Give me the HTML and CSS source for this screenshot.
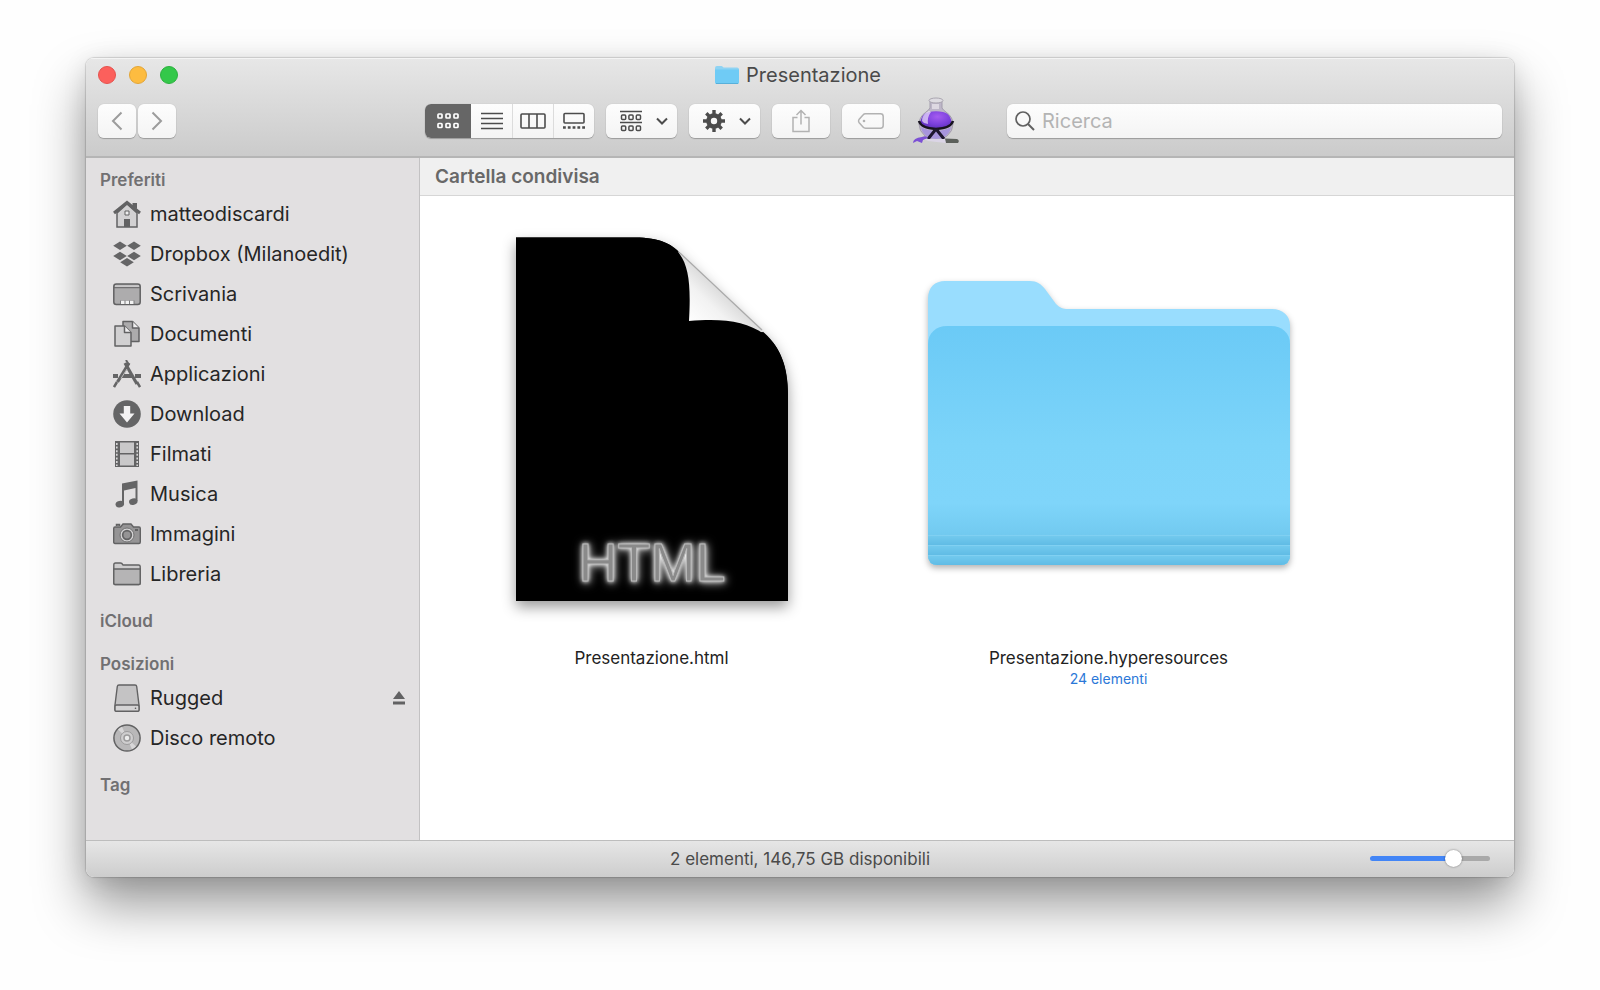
FILE: index.html
```html
<!DOCTYPE html>
<html lang="it">
<head>
<meta charset="utf-8">
<title>Presentazione</title>
<link rel="stylesheet" href="styles.css">
</head>
<body>
<main class="window">
  <header class="toolbar">
    <div class="titlebar">
      <div class="lights">
        <button class="light light-close" aria-label="Chiudi"></button>
        <button class="light light-min" aria-label="Riduci"></button>
        <button class="light light-zoom" aria-label="Ingrandisci"></button>
      </div>
      <h1 class="title">
        <svg width="24" height="20" viewBox="0 0 24 20" aria-hidden="true">
          <path d="M0 3Q0 1 2 1H6.500Q7.500 1 8.500 2.500H22Q24 2.500 24 4.500V17Q24 19 22 19H2Q0 19 0 17Z" fill="#8fd3f3"/>
          <path d="M0 4.500H24V17Q24 19 22 19H2Q0 19 0 17Z" fill="#6fcbf5"/>
          <path d="M1 18.500H23" stroke="#58b0da"/>
        </svg>
        Presentazione
      </h1>
    </div>
    <div class="tools">
      <nav class="history">
        <button class="btn nav-btn" aria-label="Indietro"><svg width="12" height="20" viewBox="0 0 12 20"><path d="M10.500 1.500L2 10L10.500 18.500"/></svg></button>
        <button class="btn nav-btn" aria-label="Avanti"><svg width="12" height="20" viewBox="0 0 12 20"><path d="M1.500 1.500L10 10L1.500 18.500"/></svg></button>
      </nav>
      <div class="segments" role="group" aria-label="Vista">
        <button class="seg seg-on" aria-pressed="true" aria-label="Icone">
          <svg width="24" height="18" viewBox="0 0 24 18" fill="none" stroke="#fff" stroke-width="1.700"><rect x="2" y="2" width="4" height="4" rx=".8"/><rect x="10" y="2" width="4" height="4" rx=".8"/><rect x="18" y="2" width="4" height="4" rx=".8"/><rect x="2" y="11.500" width="4" height="4" rx=".8"/><rect x="10" y="11.500" width="4" height="4" rx=".8"/><rect x="18" y="11.500" width="4" height="4" rx=".8"/></svg>
        </button>
        <button class="seg" aria-pressed="false" aria-label="Elenco">
          <svg width="22" height="18" viewBox="0 0 22 18" stroke="#4c4c4c" stroke-width="1.600"><path d="M0 1.500H22M0 6.500H22M0 11.500H22M0 16.500H22"/></svg>
        </button>
        <button class="seg" aria-pressed="false" aria-label="Colonne">
          <svg width="26" height="18" viewBox="0 0 26 18" fill="none" stroke="#4c4c4c" stroke-width="1.600"><rect x="1" y="2" width="24" height="14" rx="1"/><path d="M9 2V16M17 2V16"/></svg>
        </button>
        <button class="seg" aria-pressed="false" aria-label="Galleria">
          <svg width="22" height="18" viewBox="0 0 22 18" fill="none" stroke="#4c4c4c"><rect x="1" y="1.500" width="20" height="9.500" rx="1" stroke-width="1.600"/><path d="M0 15.500H22" stroke-width="2.500" stroke-dasharray="2.800 2"/></svg>
        </button>
      </div>
      <button class="btn menu-btn" aria-label="Raggruppa">
        <svg width="22" height="22" viewBox="0 0 22 22" fill="none" stroke="#4c4c4c" stroke-width="1.500"><path d="M0 1.500H22M0 12.500H22"/><rect x="1.500" y="5" width="4.200" height="4.500" rx="1"/><rect x="8.900" y="5" width="4.200" height="4.500" rx="1"/><rect x="16.300" y="5" width="4.200" height="4.500" rx="1"/><rect x="1.500" y="16" width="4.200" height="4.500" rx="1"/><rect x="8.900" y="16" width="4.200" height="4.500" rx="1"/><rect x="16.300" y="16" width="4.200" height="4.500" rx="1"/></svg>
        <svg width="12" height="8" viewBox="0 0 12 8" fill="none" stroke="#4c4c4c" stroke-width="2"><path d="M1 1.500L6 6.500L11 1.500"/></svg>
      </button>
      <button class="btn menu-btn" aria-label="Azioni">
        <svg width="22" height="22" viewBox="-11 -11 22 22" fill="none" stroke="#4c4c4c"><circle r="5.500" stroke-width="4.600"/><path d="M0-7V-11M0 7V11M-7 0H-11M7 0H11M5-5L7.700-7.700M-5-5L-7.700-7.700M5 5L7.700 7.700M-5 5L-7.700 7.700" stroke-width="3.400"/></svg>
        <svg width="12" height="8" viewBox="0 0 12 8" fill="none" stroke="#4c4c4c" stroke-width="2"><path d="M1 1.500L6 6.500L11 1.500"/></svg>
      </button>
      <button class="btn action-btn" aria-label="Condividi">
        <svg width="20" height="24" viewBox="0 0 20 24" fill="none" stroke="#b2b2b2" stroke-width="1.500"><path d="M6.500 8.500H2V22.500H18V8.500H13.500M10 15.500V1.500M5.500 6L10 1.500L14.500 6"/></svg>
      </button>
      <button class="btn action-btn" aria-label="Tag">
        <svg width="28" height="18" viewBox="0 0 28 18" fill="none" stroke="#b2b2b2" stroke-width="1.500"><path d="M8.500 1.800H23.500Q26.200 1.800 26.200 4.500V13.500Q26.200 16.200 23.500 16.200H8.500Q7 16.200 6 15L2 10.500Q1 9 2 7.500L6 3Q7 1.800 8.500 1.800Z"/><circle cx="7" cy="9" r="1.300" fill="#b2b2b2" stroke="none"/></svg>
      </button>
      <button class="flask" aria-label="Alfred">
        <svg width="48" height="48" viewBox="0 0 48 48">
          <defs>
            <radialGradient id="potion" cx=".55" cy=".3" r=".7"><stop offset="0" stop-color="#a45cf0"/><stop offset=".6" stop-color="#7a3fdc"/><stop offset="1" stop-color="#5a2fb4"/></radialGradient>
          </defs>
          <path d="M18 4H30V11Q31 13 34 15Q41 20 41 27Q41 34 35 39Q30 43 24 43Q18 43 13 39Q7 34 7 27Q7 20 14 15Q17 13 18 11Z" fill="#bdb6c8" stroke="#a39dad"/>
          <path d="M9 30Q24 38 39 30Q37 41 24 42Q11 41 9 30Z" fill="#a795dc"/>
          <path d="M10 20Q12 16 17 15Q24 13.500 31 15Q36 16 38 20Q41 26 38 29Q24 36 10 29Q7 26 10 20Z" fill="url(#potion)"/>
          <path d="M10 24Q10 17 17 14L19 15Q15 20 16 27L12 26Z" fill="#fff" opacity=".6"/>
          <ellipse cx="24" cy="3.500" rx="7" ry="2.500" fill="#dedce2" stroke="#aaa6b0"/>
          <path d="M20 7H27V12H20Z" fill="#f1eff3" opacity=".6"/>
          <path d="M7 24Q9 31 24 32Q39 31 41 24" fill="none" stroke="#17131f" stroke-width="2.500"/>
          <path d="M24 32L16 42M24 32L32 42" stroke="#1f1830" stroke-width="3"/>
          <path d="M1 46Q1 41 10 40Q14 38 16 41L11 43L10 46L5 44Z" fill="#7c50d5"/>
          <path d="M12 42L34 42L34 46L16 44Z" fill="#dbd5e6"/>
          <path d="M33 41.500L45 42Q48 43.500 46 46L34 46Z" fill="#5c605b"/>
        </svg>
      </button>
      <label class="search">
        <svg width="20" height="20" viewBox="0 0 20 20" fill="none" stroke="#606060" stroke-width="1.700" aria-hidden="true"><circle cx="8" cy="8" r="7"/><path d="M13 13L19 19" stroke-width="2"/></svg>
        <input class="search-input" type="search" placeholder="Ricerca" aria-label="Ricerca">
      </label>
    </div>
  </header>

  <div class="body">
    <aside class="sidebar">
      <h2 class="side-head">Preferiti</h2>
      <ul class="side-list">
        <li><a class="side-item" href="#"><svg class="side-icon" viewBox="0 0 28 28"><path d="M4 13L14 4L24 13V27H4Z" fill="#d2d1d2" stroke="#626263" stroke-width="1.500"/><path d="M19.500 3H24V9L19.500 6Z" fill="#626263"/><path d="M1 13L14 2.500L27 13" fill="none" stroke="#626263" stroke-width="3"/><path d="M11 19H17V27H11Z" fill="#626263"/><path d="M12 11H16V15H12Z" fill="#eee" stroke="#626263"/></svg>matteodiscardi</a></li>
        <li><a class="side-item" href="#"><svg class="side-icon" viewBox="0 0 28 28" fill="#656566"><path d="M7 1.500L13.800 5.800L7 10.100L.2 5.800ZM21 1.500L27.800 5.800L21 10.100L14.200 5.800ZM7 11.700L13.800 16L7 20.300L.2 16ZM21 11.700L27.800 16L21 20.300L14.200 16ZM14 18L20.800 22.300L14 26.600L7.200 22.300Z"/></svg>Dropbox (Milanoedit)</a></li>
        <li><a class="side-item" href="#"><svg class="side-icon" viewBox="0 0 28 28"><rect x=".8" y="4" width="26.400" height="20.500" rx="2.500" fill="#adacad" stroke="#626263" stroke-width="1.500"/><path d="M2 5.200H26V7H2Z" fill="#c9c8c9"/><path d="M1 7.700H27" stroke="#626263"/><path d="M7 21H21V24H7Z" fill="#f2f2f2"/><path d="M7.500 20.500V24M12 20.500V24M16.500 20.500V24M21 20.500V24" stroke="#7b7b7c"/></svg>Scrivania</a></li>
        <li><a class="side-item" href="#"><svg class="side-icon" viewBox="0 0 28 28" stroke="#626263" stroke-width="1.500" stroke-linejoin="round"><path d="M10 1.500H19.500L26 8V21.500H10Z" fill="#acabac"/><path d="M19.500 1.500V8H26" fill="#f0eff0"/><path d="M2 6H11.500L18 12.500V26H2Z" fill="#d1d0d1"/><path d="M11.500 6V12.500H18" fill="#f0eff0"/></svg>Documenti</a></li>
        <li><a class="side-item" href="#"><svg class="side-icon" viewBox="0 0 28 28" fill="none" stroke="#656566"><path d="M12 3L24 24" stroke-width="3.200"/><path d="M16 3L4.500 22" stroke-width="3.200"/><path d="M0 16H5M8.500 16H19M22 16H28" stroke-width="4"/><path d="M13 0L16 5" stroke-width="2"/><path d="M4 22L1 27M24 22L27 27" stroke-width="2.500"/><path d="M14 9L8 18.500" stroke="#bdbcbd"/></svg>Applicazioni</a></li>
        <li><a class="side-item" href="#"><svg class="side-icon" viewBox="0 0 28 28"><circle cx="14" cy="14" r="13.800" fill="#656566"/><path d="M10.800 6H17.200V13.500H21.500L14 22.500L6.500 13.500H10.800Z" fill="#f3f2f3"/></svg>Download</a></li>
        <li><a class="side-item" href="#"><svg class="side-icon" viewBox="0 0 28 28"><rect x="2" y="1" width="24" height="26" fill="#636364"/><path d="M3.800 3V26M24.200 3V26" stroke="#d8d7d8" stroke-width="1.600" stroke-dasharray="2 1.600"/><path d="M7 2.500H21V13H7ZM7 14.500H21V25.500H7Z" fill="#c9c8c9"/></svg>Filmati</a></li>
        <li><a class="side-item" href="#"><svg class="side-icon" viewBox="0 0 28 28" fill="#656566"><path d="M9 3.500L24.500 .5V21H22.500V8L11 10.500V24H9Z"/><ellipse cx="6.800" cy="24.200" rx="4.300" ry="3.200" transform="rotate(-15 6.800 24.200)"/><ellipse cx="20.300" cy="21.700" rx="4.300" ry="3.200" transform="rotate(-15 20.300 21.700)"/></svg>Musica</a></li>
        <li><a class="side-item" href="#"><svg class="side-icon" viewBox="0 0 28 28" stroke="#626263"><path d="M3.500 6V4.500H6.500V6" stroke-width="1.500" fill="#8c8b8c"/><path d="M2 7H7.500L10 4H18L20.500 7H26Q27.300 7 27.300 8.500V22Q27.300 23.500 26 23.500H2Q.7 23.500 .7 22V8.500Q.7 7 2 7Z" fill="#959495" stroke-width="1.400"/><circle cx="14" cy="15" r="7" fill="#d4d3d4" stroke="#717172"/><circle cx="14" cy="15" r="4.300" fill="#959495" stroke-width="1.700"/><path d="M22 10H25" stroke-width="2"/></svg>Immagini</a></li>
        <li><a class="side-item" href="#"><svg class="side-icon" viewBox="0 0 28 28" stroke="#626263" stroke-width="1.400"><path d="M.8 5Q.8 3 2.500 3H7.500Q9 3 10 5H25.500Q27.200 5 27.200 6.500V23Q27.200 24.500 26 24.500H2Q.8 24.500 .8 23Z" fill="#cdcccd"/><path d="M.8 9H27.200V23Q27.200 24.500 26 24.500H2Q.8 24.500 .8 23Z" fill="#b5b4b5"/></svg>Libreria</a></li>
      </ul>
      <h2 class="side-head">iCloud</h2>
      <h2 class="side-head">Posizioni</h2>
      <ul class="side-list">
        <li class="side-row"><a class="side-item" href="#"><svg class="side-icon" viewBox="0 0 28 28" stroke="#626263" stroke-width="1.400"><path d="M6 1H22Q23.500 1 23.700 2.500L26 21V26Q26 27.200 24.500 27.200H3.500Q2 27.200 2 26V21L4.300 2.500Q4.500 1 6 1Z" fill="#c4c3c4"/><path d="M2 22.500Q2 21 3.500 21H24.500Q26 21 26 22.500V26Q26 27.200 24.500 27.200H3.500Q2 27.200 2 26Z" fill="#d4d3d4"/><circle cx="22.500" cy="24.200" r=".8" fill="#555" stroke="none"/></svg>Rugged</a>
          <button class="eject" aria-label="Espelli Rugged"><svg width="14" height="14" viewBox="0 0 14 14" fill="#626263"><path d="M7 0L13 8H1ZM1 10.500H13V13.500H1Z"/></svg></button></li>
        <li><a class="side-item" href="#"><svg class="side-icon" viewBox="0 0 28 28"><circle cx="14" cy="14" r="13.100" fill="#b9b8b9" stroke="#626263" stroke-width="1.500"/><path d="M14 14L5 5.500A12.300 12.300 0 0 1 9 2.800ZM14 14L23 22.500A12.300 12.300 0 0 1 19 25.200Z" fill="#d8d7d8"/><circle cx="14" cy="14" r="6.500" fill="#cfcecf" stroke="#9c9b9c"/><circle cx="14" cy="14" r="3" fill="#ececec" stroke="#9c9b9c" stroke-width="1.500"/></svg>Disco remoto</a></li>
      </ul>
      <h2 class="side-head">Tag</h2>
    </aside>

    <section class="content">
      <h2 class="pathbar">Cartella condivisa</h2>
      <div class="files">
        <figure class="file">
          <svg class="file-icon" width="364" height="364" viewBox="0 0 364 364" role="img" aria-label="Documento HTML">
            <defs>
              <linearGradient id="curl" gradientUnits="userSpaceOnUse" x1="216" y1="84" x2="252" y2="46"><stop offset="0" stop-color="#fff"/><stop offset=".55" stop-color="#f2f2f2"/><stop offset="1" stop-color="#d4d4d4"/></linearGradient>
            </defs>
            <g class="page-shadow">
              <path d="M46 .500H165C190 .500 204 8 211 17L291 93C310 108 318 130 318 158V364H46Z" fill="#000"/>
            </g>
            <path d="M208 14L294 95L255 97L219 84Z" fill="url(#curl)"/>
            <path d="M210 16L292 93" stroke="#aaa" stroke-width="1.200"/>
            <path d="M46 .500H165C190 .500 201 7 208 15C219 28 221 48 219 84C252 81 276 84 294 97C311 110 318 130 318 158V364H46Z" fill="#000"/>
            <text class="page-text" x="182" y="344" text-anchor="middle">HTML</text>
          </svg>
          <figcaption class="file-label">Presentazione.html</figcaption>
        </figure>
        <figure class="file">
          <svg class="file-icon" width="364" height="364" viewBox="0 0 364 364" role="img" aria-label="Cartella">
            <defs>
              <linearGradient id="front" x1="0" y1="0" x2="0" y2="1"><stop offset="0" stop-color="#6bcaf6"/><stop offset=".5" stop-color="#7cd4f9"/><stop offset=".74" stop-color="#7fd5fa"/><stop offset=".87" stop-color="#72caf0"/><stop offset="1" stop-color="#69c3eb"/></linearGradient>
              <linearGradient id="fold" x1="0" y1="0" x2="0" y2="1"><stop offset="0" stop-color="#74cbef"/><stop offset="1" stop-color="#60bce5"/></linearGradient>
            </defs>
            <g class="folder-shadow">
              <path d="M1 62C1 50 8 44 18 44H103C110 44 114 47 118 52L129 67C133 71 136 72 141 72H345C356 72 363 79 363 88V318Q363 328 353 328H11Q1 328 1 318Z" fill="#99ddfe"/>
              <path d="M1 107C1 96 9 89 20 89H344C355 89 363 96 363 107V318Q363 328 353 328H11Q1 328 1 318Z" fill="url(#front)"/>
              <path d="M1 298H363V308H1Z" fill="url(#fold)"/>
              <path d="M1 308H363V318H1Z" fill="url(#fold)"/>
              <path d="M1 318H363Q363 328 353 328H11Q1 328 1 318Z" fill="url(#fold)"/>
              <path d="M1 298.500H363M1 308.500H363M1 318.500H363" stroke="#80d0f2"/>
            </g>
          </svg>
          <figcaption class="file-label">Presentazione.hyperesources<span class="file-count">24 elementi</span></figcaption>
        </figure>
      </div>
    </section>
  </div>

  <footer class="statusbar">
    <p class="status-text">2 elementi, 146,75 GB disponibili</p>
    <input class="zoom" type="range" min="0" max="100" value="73" aria-label="Dimensione icone">
  </footer>
</main>
</body>
</html>
```
FILE: styles.css
```css
* { box-sizing: border-box; }

body {
  margin: 0;
  min-height: 100vh;
  padding: 58px 86px 113px;
  display: flex;
  background: #fefefe;
  font-family: Inter, "Liberation Sans", sans-serif;
  color: #262626;
}

button { border: 0; padding: 0; background: none; font: inherit; }
svg { display: block; flex: none; }
ul, figure, h1, h2, p { margin: 0; padding: 0; list-style: none; }

.window {
  flex: 1;
  display: flex;
  flex-direction: column;
  border-radius: 8px;
  overflow: hidden;
  background: #fff;
  box-shadow: 0 0 1px 1px rgba(0, 0, 0, .14), 0 28px 52px rgba(0, 0, 0, .4), 0 4px 24px rgba(0, 0, 0, .1);
}

.toolbar {
  padding: 0 12px 18px;
  background: linear-gradient(#e7e7e7, #cbcbcb);
  border-bottom: 2px solid #b5b5b5;
  box-shadow: inset 0 1px #f4f4f4;
}

.titlebar {
  display: grid;
  grid-template-columns: 1fr auto 1fr;
  align-items: center;
  height: 34px;
  margin-bottom: 12px;
}

.lights { display: flex; gap: 13px; }
.light { width: 18px; height: 18px; border-radius: 50%; border: 1px solid; }
.light-close { background: #fc605c; border-color: #e5524e; }
.light-min { background: #fdbc40; border-color: #e2a537; }
.light-zoom { background: #34c84a; border-color: #2bb03e; }

.title {
  display: flex;
  align-items: center;
  gap: 7px;
  padding-right: 4px;
  font-size: 20px;
  font-weight: 400;
  line-height: 24px;
  color: #4a4a4a;
}

.tools { display: flex; align-items: center; gap: 12px; height: 34px; }

.btn, .segments, .search {
  height: 34px;
  border-radius: 6px;
  background: linear-gradient(#fdfdfd, #f4f4f4);
  box-shadow: 0 1px 1px rgba(0, 0, 0, .24), 0 0 1px rgba(0, 0, 0, .2);
}
.btn { display: flex; align-items: center; justify-content: center; }

.history { display: flex; gap: 2px; width: 315px; }
.nav-btn { width: 38px; fill: none; stroke: #9c9c9c; stroke-width: 2; }

.segments { display: flex; overflow: hidden; }
.seg { width: 41px; display: flex; align-items: center; justify-content: center; border-left: 1px solid #dcdcdc; }
.seg-on { width: 46px; background: #666; border-left: 0; }
.seg-on + .seg { border-left: 0; }

.menu-btn { width: 71px; gap: 14px; padding-left: 4px; }
.action-btn { width: 58px; }
.flask { width: 48px; height: 48px; margin-right: 35px; }

.search { flex: 1; display: flex; align-items: center; gap: 7px; padding: 0 8px; }
.search-input {
  flex: 1;
  min-width: 0;
  border: 0;
  padding: 0;
  background: none;
  outline: 0;
  font: inherit;
  font-size: 20px;
}
.search-input::placeholder { color: #b4b4b4; opacity: 1; }

.body { flex: 1; display: flex; }

.sidebar {
  width: 334px;
  padding: 12px 13px 20px 14px;
  background: #e2e0e1;
  border-right: 1px solid #c3c2c3;
}
.side-head {
  font-size: 17px;
  font-weight: 600;
  line-height: 20px;
  color: #717072;
  margin-bottom: 23px;
}
.side-head:has(+ .side-list) { margin-bottom: 4px; }
.side-list { margin-bottom: 17px; }
.side-row { display: flex; justify-content: space-between; align-items: center; }
.side-item {
  display: flex;
  align-items: center;
  gap: 9px;
  height: 40px;
  padding-left: 13px;
  font-size: 20px;
  color: #262626;
  text-decoration: none;
}
.side-icon { width: 28px; height: 28px; }

.content { flex: 1; display: flex; flex-direction: column; }
.pathbar {
  height: 38px;
  padding: 0 15px;
  background: #f0f0f0;
  border-bottom: 1px solid #d6d6d6;
  font-size: 19px;
  font-weight: 600;
  line-height: 38px;
  color: #686868;
}
.files {
  display: grid;
  grid-template-columns: repeat(auto-fill, 457px);
  padding: 41px 3px;
}
.file { display: flex; flex-direction: column; align-items: center; gap: 45px; }
.file-icon { overflow: visible; }
.page-shadow { filter: drop-shadow(0 6px 7px rgba(0, 0, 0, .4)); }
.folder-shadow { filter: drop-shadow(0 3px 3px rgba(0, 0, 0, .3)); }
.page-text {
  font: 54px "Liberation Sans", Arial, sans-serif;
  fill: #8a8a8a;
  stroke: #b9b9b9;
  stroke-width: 1px;
  filter: drop-shadow(0 0 2px #fff) drop-shadow(1px 1px 4px #aaa);
}
.file-label { font-size: 17px; line-height: 24px; text-align: center; color: #222; }
.file-count { display: block; font-size: 14px; line-height: 18px; color: #2b78d8; }

.statusbar {
  display: grid;
  grid-template-columns: 1fr auto 1fr;
  align-items: center;
  height: 37px;
  padding: 0 24px 1px;
  background: linear-gradient(#e6e6e6, #cdcdcd);
  border-top: 1px solid #bdbdbd;
}
.status-text { grid-column: 2; font-size: 17px; color: #4a4a4a; }

.zoom {
  justify-self: end;
  width: 120px;
  height: 18px;
  margin: 0;
  appearance: none;
  background: none;
}
.zoom::-webkit-slider-runnable-track {
  height: 5px;
  border-radius: 3px;
  background: linear-gradient(90deg, #4285f6 70%, #a9a9a9 70%);
}
.zoom::-webkit-slider-thumb {
  appearance: none;
  width: 17px;
  height: 17px;
  margin-top: -6px;
  border-radius: 50%;
  background: #fff;
  box-shadow: 0 0 2px rgba(0, 0, 0, .5);
}
```
